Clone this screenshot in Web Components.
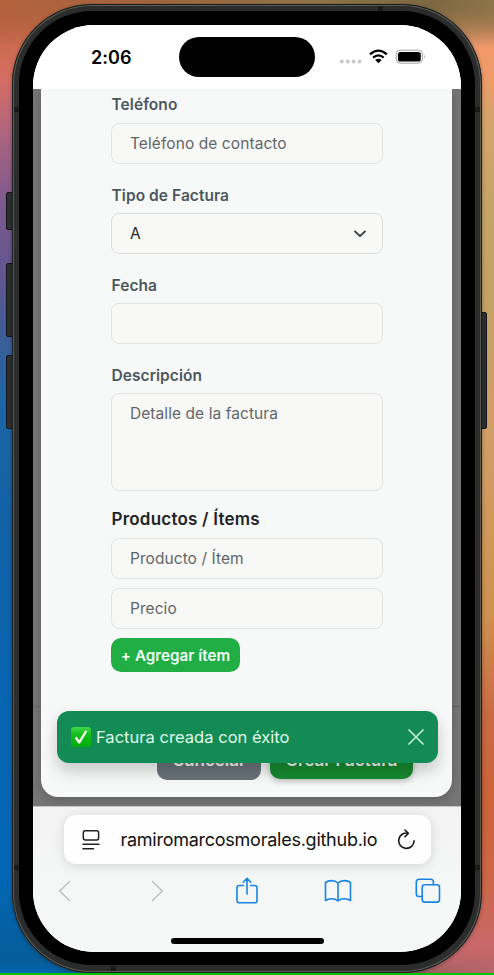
<!DOCTYPE html>
<html lang="es">
<head>
<meta charset="utf-8">
<title>Factura</title>
<style>
html,body{margin:0;height:100%;overflow:hidden;font-family:Inter,"Liberation Sans",sans-serif}
</style>
</head>
<body>
<phone-desktop>
  <phone-frame>
    <status-bar time="2:06"></status-bar>
    <invoice-page>
      <form-field label="Teléfono"><input-box ls="0.08">Teléfono de contacto</input-box></form-field>
      <form-field label="Tipo de Factura"><input-box select>A</input-box></form-field>
      <form-field label="Fecha"><input-box></input-box></form-field>
      <form-field label="Descripción" class="last"><input-box area ls="0.07">Detalle de la factura</input-box></form-field>
      <item-list></item-list>
    </invoice-page>
    <browser-bar></browser-bar>
  </phone-frame>
</phone-desktop>
<script>
const define=(name,html,setup)=>customElements.define(name,class extends HTMLElement{
  connectedCallback(){
    if(this.shadowRoot)return;
    this.attachShadow({mode:'open'}).innerHTML=`<style>*{box-sizing:border-box}</style>`+html;
    if(setup)setup(this,this.shadowRoot);
  }
});

define('phone-desktop',`<style>
:host{display:flex;box-sizing:border-box;width:494px;height:975px;padding:4px 12px 0;position:relative;overflow:hidden;
background:linear-gradient(#ac623f,#cd6b50 5%,#d66d63 8%,#ac6480 14%,#7b5a8e 21%,#62558f 28%,#3b5e98 35%,#1d66a5 41%,#1562a5 50%,#0864b0 70%,#0067b4 90%,#075b94) 0 0/50% 100% no-repeat,
linear-gradient(#8a7047,#f0996a 5%,#ef9b69 7.5%,#d5a36a 12%,#c4a468 22%,#c5a165 34%,#d19f68 43%,#ce9252 63%,#c96a43 73%,#cb6339 82%,#cc6746 90%,#c9686a 97%,#b06266) 100% 0/50% 100% no-repeat}
:host::before,:host::after{content:"";position:absolute;left:0;right:0}
:host::before{top:0;height:45px;background:linear-gradient(90deg,#b4603d,#a1683f 35%,#8d7648 65%,#7d6843 88%,#8f7449);-webkit-mask:linear-gradient(#000 10%,transparent);mask:linear-gradient(#000 10%,transparent)}
:host::after{bottom:0;height:14px;background:linear-gradient(90deg,#0067b4 10%,#21506c 30%,#4a5058 60%,#a05f60 88%,#c0686c);-webkit-mask:linear-gradient(transparent,#000);mask:linear-gradient(transparent,#000)}
::slotted(*){z-index:1}
.k{position:absolute;background:#2e2f2f;border:1px solid #121517;border-radius:2px}
.line{position:absolute;z-index:2;left:0;right:0;bottom:0;height:2px;background:#00c400}
</style>
<i class="k" style="left:6px;top:192px;width:8px;height:38px"></i>
<i class="k" style="left:6px;top:263px;width:8px;height:74px"></i>
<i class="k" style="left:6px;top:355px;width:8px;height:74px"></i>
<i class="k" style="right:7px;top:312px;width:8px;height:117px"></i>
<slot></slot><i class="line"></i>`);

define('phone-frame',`<style>
:host{display:block;position:relative;width:470px;height:969px;border-radius:80px;background:#2b2c2c;padding:7px 7px 8px 7px;box-sizing:border-box;
box-shadow:inset 0 0 0 1px #191c1c,inset 0 0 0 2px #5c5b53,0 1px 4px #0005}
.black{height:954px;border-radius:73px;background:#000;padding:14px 14px 13px}
.screen{width:428px;height:927px;border-radius:61px;overflow:hidden;display:flex;flex-direction:column;background:#fff}
.b{position:absolute;background:#191a1a;width:5px;height:5px}
</style>
<i class="b" style="left:2px;top:103px"></i><i class="b" style="right:2px;top:103px"></i>
<i class="b" style="left:2px;top:861px"></i><i class="b" style="right:2px;top:861px"></i>
<i class="b" style="left:366px;top:2px"></i><i class="b" style="left:99px;bottom:2px"></i>
<div class="black"><div class="screen"><slot></slot></div></div>`);

define('status-bar',`<style>
:host{display:flex;height:64px;flex:none;background:#fff;align-items:center}
.t{width:146px;padding:1px 0 0 58px;font-size:18px;font-weight:600;color:#000;letter-spacing:.05px;line-height:22px}
.island{width:136px;height:40px;border-radius:20px;background:#000}
svg{margin-left:22px}
</style><div class="t"></div><div class="island"></div>
<svg width="96" height="24" viewBox="0 0 96 24">
<g fill="#c8c8c8"><circle cx="4.8" cy="16.5" r="2"/><circle cx="10.8" cy="16.5" r="2"/><circle cx="16.6" cy="16.5" r="2"/><circle cx="22.5" cy="16.5" r="2"/></g>
<g fill="none" stroke="#000" stroke-width="2.3"><path d="M33 9.4Q41.4 1.8 49.8 9.4"/><path d="M36.1 12.7Q41.4 8 46.7 12.7"/></g><path fill="#000" d="M38.2 15.1Q41.4 12.5 44.6 15.1L41.4 18.2Z"/>
<rect x="59.2" y="5.2" width="26.2" height="13" rx="4" fill="none" stroke="#a5a5a5"/><rect x="60.9" y="6.9" width="22.9" height="9.7" rx="2.7"/><path d="M86.9 9.6Q88.9 11.7 86.9 13.8Z" fill="#aaa"/>
</svg>`,(e,r)=>r.querySelector('.t').textContent=e.getAttribute('time'));

define('form-field',`<style>
:host{display:flex;flex-direction:column;gap:8px;margin-bottom:22px}
:host(.last){margin-bottom:17px}
label{font-size:15.5px;font-weight:600;color:#4b575c;height:19.25px;line-height:20.25px;white-space:nowrap;letter-spacing:.06px;padding-left:.5px}
</style><label></label><slot></slot>`,(e,r)=>{r.querySelector('label').textContent=e.getAttribute('label')});

define('input-box',`<style>
:host{display:flex;justify-content:space-between;align-items:center;box-sizing:border-box;height:41px;border:1px solid #e0e5e4;border-radius:8px;background:#f8f8f7;padding:1px 16px 0 18px;font-size:15.5px;line-height:20px;color:#626668;white-space:nowrap}
:host([area]){height:98px;align-items:flex-start;padding-top:10px}
:host([select]){color:#252829;border-color:#d9dddc}
svg{display:none}:host([select]) svg{display:block}
</style><span><slot></slot></span><svg width="12" height="8" viewBox="0 0 12 8"><path d="M1 1.4L6 6.2L11 1.4" fill="none" stroke="#333a3c" stroke-width="1.8" stroke-linecap="round" stroke-linejoin="round"/></svg>`,(e,r)=>{r.querySelector('span').style.letterSpacing=(e.getAttribute('ls')||0.06)+'px'});

define('item-list',`<style>
:host{display:flex;flex-direction:column;gap:9px}
h3{margin:0 0 -1px;font-size:17px;line-height:22px;font-weight:600;color:#202426;letter-spacing:.22px;padding-left:.5px}
button{align-self:flex-start;width:129px;height:34px;border:0;border-radius:10px;background:#20ae45;color:#f3fff5;font:600 15.2px Inter,sans-serif;letter-spacing:.03px;padding:0;white-space:nowrap}
</style><h3>Productos / Ítems</h3><input-box>Producto / Ítem</input-box><input-box>Precio</input-box><button>+ Agregar ítem</button>`);

define('toast-message',`<style>
:host{display:flex;align-items:center;box-sizing:border-box;height:52px;border-radius:12px;background:#128c54;color:#e2f9ed;padding:0 14px;box-shadow:0 8px 16px #0003;font-size:16.5px;line-height:22px;white-space:nowrap}
span{flex:1;margin-left:5.5px;letter-spacing:.03px}
</style><svg width="20" height="20" viewBox="0 0 20 20"><defs><linearGradient id="g" x2="0" y2="1"><stop stop-color="#42d84b"/><stop offset=".35" stop-color="#12bf18"/><stop offset="1" stop-color="#05ad0c"/></linearGradient></defs><rect width="20" height="20" rx="3" fill="url(#g)"/><path d="M3.8 11.2L5.6 9.6L8.2 13.2L14.2 3.5L16.4 4.2L9 16.5H7.4Z" fill="#f3fff1"/></svg>
<span><slot></slot></span>
<svg width="16" height="16" viewBox="0 0 16 16"><path d="M1 1L15 15M15 1L1 15" stroke="#c5ecd8" stroke-width="1.7" stroke-linecap="round"/></svg>`);

define('invoice-page',`<style>
:host{display:block;position:relative;height:717px;flex:none;background:#767676;padding:0 9px 0 8px;box-sizing:border-box;overflow:hidden}
:host::before{content:"";position:absolute;left:0;right:0;top:617px;height:1px;background:#656565}
.card{position:relative;height:708px;background:#f7f9f9;border-radius:0 0 17px 17px;padding:6.25px 69px 0 70px;box-shadow:0 3px 12px #0003}
.actions{position:absolute;left:116px;top:650px;display:flex;gap:9px;line-height:19px;text-align:center;font-weight:600;font-size:17px;color:#f3f8f5}
.actions div{padding-top:12px;height:41px;border-radius:10px;white-space:nowrap}
.c{width:104px;background:#69737a}
.actions .s{width:143px;height:40px;background:#178a30;box-shadow:0 2px 6px #0004}
toast-message{position:absolute;left:23.5px;top:621.6px;width:381px}
</style><div class="card"><slot></slot><div class="actions"><div class="c">Cancelar</div><div class="s">Crear Factura</div></div></div>
<toast-message>Factura creada con éxito</toast-message>`);

define('browser-bar',`<style>
:host{display:flex;flex-direction:column;flex:1;align-items:center;background:linear-gradient(#f2f3f2,#f5f7f6 50%,#f6f8f7);border-top:1px solid #c5c6c5;box-sizing:border-box}
.url{margin-top:8px;width:367px;height:49px;flex:none;border-radius:12px;background:#fdfefd;box-shadow:0 2px 12px #0002;display:flex;align-items:center;padding:0 14px 0 18px;font-size:18px;color:#111}
.url span{margin-left:20.9px;flex:1;letter-spacing:-.25px;white-space:nowrap}
nav{display:flex;align-self:stretch;padding-left:25px;height:28px;margin-top:13px}
nav svg{flex:none;fill:none;stroke:#1784e4;stroke-width:1.6;stroke-linecap:round;stroke-linejoin:round}
.home{width:153px;height:5.5px;border-radius:3px;background:#000;margin-top:33px}
</style>
<div class="url"><svg width="18" height="22" viewBox="0 0 18 22" fill="none" stroke="#222" stroke-width="1.5" stroke-linecap="round"><rect x="1.3" y="1.7" width="15.3" height="9.3" rx="2"/><path d="M1 15.2H17M1 19.7H11.5"/></svg><span>ramiromarcosmorales.github.io</span>
<svg width="20" height="22" viewBox="0 0 20 22" fill="none" stroke="#171717" stroke-width="1.6" stroke-linecap="round" stroke-linejoin="round"><path d="M11.2 4.2A7.7 7.7 0 1 0 17.1 11.8M7.9 1L11.4 4.3L8 7.8"/></svg></div>
<nav>
<svg width="13" height="28" viewBox="0 0 13 28"><path stroke="#bfc1c1" d="M11.5 4.5L1.7 14L11.5 23.5"/></svg>
<svg width="13" height="28" viewBox="0 0 13 28" style="margin-left:80px"><path stroke="#bfc1c1" d="M1.5 4.5L11.3 14L1.5 23.5"/></svg>
<svg width="22" height="28" viewBox="0 0 22 28" style="margin-left:72px"><path d="M7.5 8.5H3.3Q1 8.5 1 10.8V23.5Q1 25.8 3.3 25.8H18.7Q21 25.8 21 23.5V10.8Q21 8.5 18.7 8.5H14.5M11 17V1.5M7.3 5.2L11 1.3L14.7 5.2"/></svg>
<svg width="28" height="28" viewBox="0 0 28 28" style="margin-left:66px"><path d="M14 6Q11.5 3.6 7.7 3.6Q3.5 3.6 1.5 5.6V23.5Q4 21.8 7.5 21.8Q11.5 21.8 14 24Q16.5 21.8 20.5 21.8Q24 21.8 26.5 23.5V5.6Q24.5 3.6 20.3 3.6Q16.5 3.6 14 6V24"/></svg>
<svg width="26" height="28" viewBox="0 0 26 28" style="margin-left:63px"><rect x="7.2" y="7.8" width="17.3" height="17.3" rx="2.6"/><path d="M7 19.5H4Q1.3 19.5 1.3 16.8V5Q1.3 2.3 4 2.3H15.7Q18.4 2.3 18.4 5V7.6"/></svg>
</nav><div class="home"></div>`);
</script>
</body>
</html>
